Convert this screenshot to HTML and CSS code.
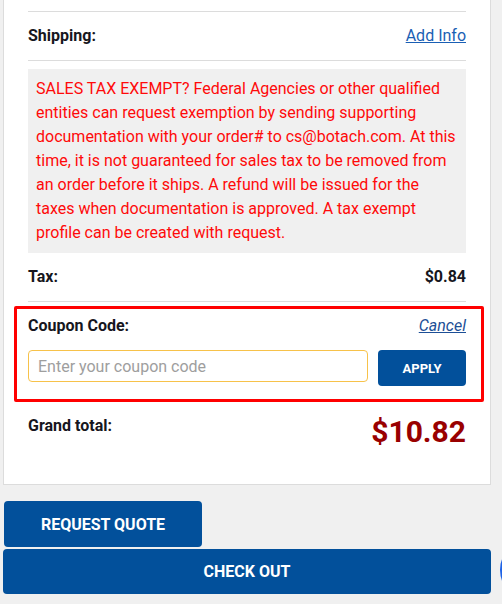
FILE: index.html
```html
<!DOCTYPE html>
<html lang="en">
<head>
  <meta charset="UTF-8">
  <title>Cart Summary</title>
  <meta name="viewport" content="width=device-width, initial-scale=1.0">
  <link rel="stylesheet" href="styles.css">
</head>
<body>

  <div class="page">
    <div class="card">
      <div class="row row-first"></div>

      <div class="row">
        <span class="label">Shipping:</span>
        <a class="link" href="#">Add Info</a>
      </div>

      <div class="tax-note">
        SALES TAX EXEMPT? Federal Agencies or other qualified entities can request exemption by sending supporting documentation with your order# to cs@botach.com. At this time, it is not guaranteed for sales tax to be removed from an order before it ships. A refund will be issued for the taxes when documentation is approved. A tax exempt profile can be created with request.
      </div>

      <div class="row">
        <span class="label">Tax:</span>
        <span class="label">$0.84</span>
      </div>

      <!-- Coupon form -->
      <div class="coupon">
        <div class="coupon-head">
          <span class="label">Coupon Code:</span>
          <a class="link link-italic" href="#">Cancel</a>
        </div>
        <div class="coupon-form">
          <input class="coupon-input" type="text" placeholder="Enter your coupon code">
          <button class="btn btn-apply">Apply</button>
        </div>
      </div>

      <div class="total">
        <span class="label">Grand total:</span>
        <span class="price">$10.82</span>
      </div>
    </div>

    <div class="actions">
      <button class="btn btn-quote">Request Quote</button>
      <button class="btn btn-checkout">Check Out</button>
    </div>
  </div>

  <div class="chat-bubble"></div>

</body>
</html>
```

FILE: styles.css
```css
* {
  margin: 0;
  padding: 0;
  box-sizing: border-box;
}

body, html {
  height: 100%;
  overflow: hidden;
}

body {
  background: #f0f0f0;
  font-family: Roboto, 'Liberation Sans', sans-serif;
  font-size: 16px;
  line-height: 24px;
  color: #161620;
}

.page {
  padding-left: 3px;
}

.card {
  width: 488px;
  background: #fff;
  border: 1px solid #dcdcdc;
  border-top: 0;
  padding: 0 24px 34px 24px;
}

.row {
  display: flex;
  justify-content: space-between;
  align-items: center;
  padding: 12px 0;
  border-bottom: 1px solid #dcdcdc;
}

.row-first {
  padding: 0;
  height: 12px;
}

.label {
  font-weight: 700;
}

.link {
  color: #1a5fb4;
  text-decoration: underline;
}

.link-italic {
  font-style: italic;
  color: #1d4f96;
}

.tax-note {
  margin-top: 8px;
  background: #f0f0f0;
  padding: 8px;
  color: #ff0a0a;
}

.coupon {
  margin: 4px -18px 0 -14px;
  border: 3px solid #ff0000;
  border-radius: 2px;
  padding: 5px 15px 13px 11px;
}

.coupon-head {
  display: flex;
  justify-content: space-between;
  align-items: center;
}

.coupon-form {
  display: flex;
  align-items: flex-start;
  gap: 10px;
  margin-top: 12px;
}

.coupon-input {
  flex: 1;
  height: 32px;
  border: 1px solid #f7c24a;
  border-radius: 4px;
  padding: 0 9px;
  font-family: inherit;
  font-size: 16px;
  color: #333;
  outline: none;
}

.coupon-input::placeholder {
  color: #9e9e9e;
}

.btn {
  border: none;
  border-radius: 4px;
  background: #02509b;
  color: #fff;
  font-family: inherit;
  font-weight: 700;
  text-transform: uppercase;
  cursor: pointer;
}

.btn-apply {
  width: 88px;
  height: 36px;
  font-size: 13px;
}

.total {
  display: flex;
  justify-content: space-between;
  align-items: flex-start;
  padding-top: 12px;
}

.price {
  font-size: 30px;
  line-height: 36px;
  font-weight: 700;
  color: #990000;
}

.actions {
  display: flex;
  flex-direction: column;
  align-items: flex-start;
  gap: 2px;
  margin-top: 16px;
}

.btn-quote {
  width: 198px;
  height: 46px;
  margin-left: 1px;
  font-size: 16px;
}

.btn-checkout {
  width: 488px;
  height: 45px;
  font-size: 16px;
}

.chat-bubble {
  position: fixed;
  left: 500px;
  top: 538px;
  width: 64px;
  height: 64px;
  border-radius: 50%;
  background: #1f63e6;
}
```
